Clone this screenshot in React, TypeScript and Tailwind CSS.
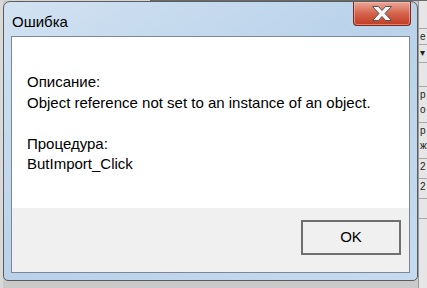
import React from "react";

const font = { fontFamily: '"Liberation Sans", Arial, sans-serif' };

function CloseButton() {
  return (
    <div className="w-[58px] h-[24px] rounded-b-[4px] border border-t-0 border-[#7a2a1c] bg-gradient-to-b from-[#e9a899] via-[#d4634c] to-[#c33a20] flex items-center justify-center shadow-[inset_0_0_0_1px_rgba(255,200,190,0.5)]">
      <svg width="24" height="17" viewBox="0 0 24 17">
        <path
          d="M2.5 1.5 L8.5 1.5 L12 5.5 L15.5 1.5 L21.5 1.5 L15 8.5 L21.5 15.5 L15.5 15.5 L12 11.5 L8.5 15.5 L2.5 15.5 L9 8.5 Z"
          fill="#f6f6f6"
          stroke="#555"
          strokeWidth="1"
          strokeLinejoin="round"
        />
      </svg>
    </div>
  );
}

function SheetStrip() {
  const rows = [
    { h: 28, t: "" },
    { h: 16, t: "e" },
    { h: 18, t: "▾" },
    { h: 24, t: "" },
    { h: 36, t: "р\nо" },
    { h: 36, t: "р\nж" },
    { h: 20, t: "2" },
    { h: 20, t: "2" },
    { h: 20, t: "" },
    { h: 70, t: "" },
  ];
  return (
    <div className="w-[9px] flex flex-col bg-[#e6e6e6] border-l border-[#9a9a9a]">
      {rows.map((r, i) => (
        <div
          key={i}
          className="border-b border-[#a8a8a8] text-[10px] leading-[15px] text-[#222] overflow-hidden whitespace-pre pl-[1px]"
          style={{ height: r.h }}
        >
          {r.t}
        </div>
      ))}
    </div>
  );
}

export default function App() {
  return (
    <div className="w-[427px] h-[288px] overflow-hidden bg-[#c9c9c9] flex flex-col" style={font}>
      <div className="h-[4px] flex">
        <div className="w-[150px] bg-[#d4d4d4]" />
        <div className="flex-1 bg-[#bdbdbd] border-b border-[#6a6a6a]" />
      </div>
      <div className="flex flex-1">
        <div className="w-[3px] bg-[#d9d9d9]" />
        <div className="w-[415px] h-[280px] rounded-t-[7px] rounded-b-[5px] border border-[#5c5c5c] bg-gradient-to-br from-[#d2e2f2] via-[#b9d2ea] to-[#c6dbef] flex flex-col">
          <div className="h-[34px] flex items-start justify-between pl-[8px] pr-[6px]">
            <div className="pt-[11px] text-[15px] leading-[18px] text-black">Ошибка</div>
            <CloseButton />
          </div>
          <div className="mx-[7px] h-[237px] border border-[#7d8896] flex flex-col">
            <div className="h-[171px] bg-white pl-[15px] pt-[35px] text-[15px] leading-[20.5px] text-black">
              <div>Описание:</div>
              <div>Object reference not set to an instance of an object.</div>
              <div>&nbsp;</div>
              <div>Процедура:</div>
              <div>ButImport_Click</div>
            </div>
            <div className="flex-1 bg-[#f0f0f0] flex justify-end pt-[12px] pr-[8px]">
              <button className="w-[100px] h-[35px] border-2 border-[#6f6f6f] bg-[#f0f0f0] text-[15px] text-black">
                OK
              </button>
            </div>
          </div>
        </div>
        <SheetStrip />
      </div>
    </div>
  );
}
